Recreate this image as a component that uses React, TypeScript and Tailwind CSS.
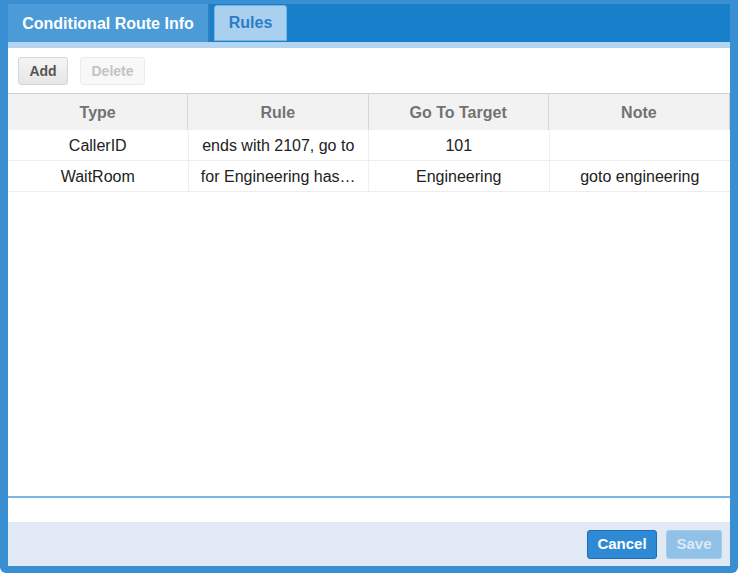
import React from "react";

const cols = ["Type", "Rule", "Go To Target", "Note"];
const rows = [
  ["CallerID", "ends with 2107, go to", "101", ""],
  ["WaitRoom", "for Engineering has…", "Engineering", "goto engineering"],
];

export default function App() {
  return (
    <div
      className="w-[738px] h-[573px] bg-[#3a8fd3] pt-[4px] px-[8px] pb-[7px] rounded-b-[6px] flex flex-col"
      style={{ fontFamily: '"Liberation Sans", Arial, sans-serif' }}
    >
      {/* Tab bar */}
      <div className="h-[38px] bg-[#187fca] flex items-stretch shrink-0">
        <div className="w-[202px] bg-[#4b9bd9] border-r-2 border-[#2e7fc4] flex items-center justify-center pt-[1px] text-white font-bold text-[16px]">
          Conditional Route Info
        </div>
        <div className="ml-[4px] mt-[1px] mb-[1px] w-[73px] bg-[#a9d0ef] border border-[#75b4e5] rounded-t-[3px] flex items-center justify-center text-[#2b7cc8] font-bold text-[16px]">
          Rules
        </div>
      </div>
      <div className="h-[6px] bg-[#b3d5f1] shrink-0" />
      {/* Content */}
      <div className="flex-1 bg-white flex flex-col min-h-0">
        <div className="h-[45px] flex items-start pt-[9px] pl-[10px] gap-[12px] shrink-0">
          <div className="w-[50px] h-[28px] rounded-[3px] border border-[#d6d6d6] bg-gradient-to-b from-[#f5f5f5] to-[#e6e6e6] flex items-center justify-center text-[14px] font-bold text-[#555]">
            Add
          </div>
          <div className="w-[65px] h-[28px] rounded-[3px] border border-[#ebebeb] bg-[#f8f8f8] flex items-center justify-center text-[14px] font-bold text-[#c4c4c4]">
            Delete
          </div>
        </div>
        <div className="flex-1 min-h-0">
          <div className="grid grid-cols-4 h-[37px] border-t border-[#cfcfcf] bg-[#f2f2f2] border-r border-r-[#cfcfcf]">
            {cols.map((c, i) => (
              <div
                key={c}
                className={`flex items-center justify-center pt-[1px] text-[16px] font-bold text-[#727272] ${i < 3 ? "border-r border-[#d8d8d8]" : ""}`}
              >
                {c}
              </div>
            ))}
          </div>
          {rows.map((r, ri) => (
            <div key={ri} className="grid grid-cols-4 h-[31px] border-b border-[#ececec]">
              {r.map((cell, i) => (
                <div
                  key={i}
                  className={`flex items-center justify-center pt-[2px] text-[16px] text-[#222] whitespace-nowrap overflow-hidden ${i < 3 ? "border-r border-[#efefef]" : ""}`}
                >
                  {cell}
                </div>
              ))}
            </div>
          ))}
        </div>
        <div className="h-[2px] bg-[#7cb6e5] shrink-0" />
        <div className="h-[24px] bg-white shrink-0" />
        <div className="h-[44px] bg-[#e1eaf4] shrink-0 flex items-center justify-end gap-[9px] pr-[8px]">
          <div className="w-[70px] h-[29px] rounded-[3px] border border-[#1f6db0] bg-[#2e8ad4] flex items-center justify-center text-white font-bold text-[15px]">
            Cancel
          </div>
          <div className="w-[56px] h-[29px] rounded-[3px] border border-[#a3cbea] bg-[#91c1e7] flex items-center justify-center text-[#dde9f5] font-bold text-[15px]">
            Save
          </div>
        </div>
      </div>
    </div>
  );
}
